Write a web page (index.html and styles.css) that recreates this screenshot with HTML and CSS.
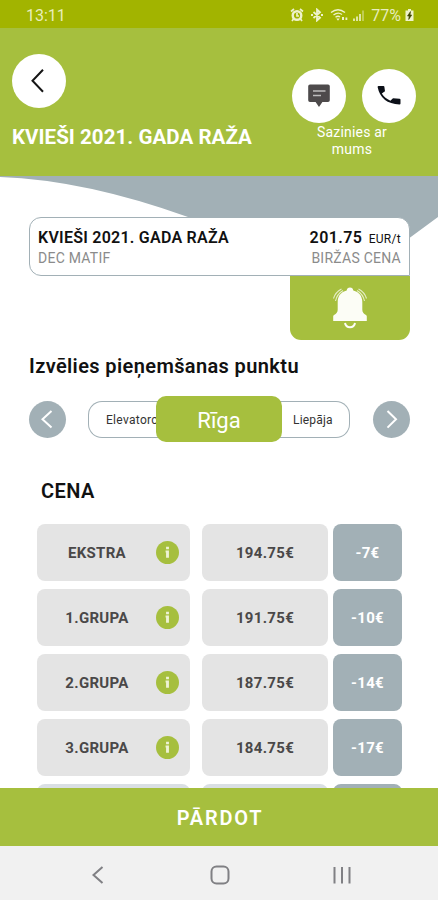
FILE: index.html
```
<!DOCTYPE html>
<html lang="lv">
<head>
  <meta charset="utf-8">
  <title>Kvieši 2021. gada raža</title>
  <link rel="stylesheet" href="styles.css">
</head>
<body>
  <div id="app">
    <!-- Status Bar -->
    <div class="status-bar">
      <span class="clock">13:11</span>
      <div class="status-icons">
        <!-- Alarm -->
        <svg class="alarm" viewBox="0 0 14 14">
          <circle cx="7" cy="7.5" r="4.3" fill="none" stroke-width="2.4"/>
          <path d="M1 3.5L4 1M13 3.5L10 1M3.5 11L2 13M10.5 11L12 13M7 5v3h2" fill="none" stroke-width="1.7"/>
        </svg>
        <!-- Bluetooth -->
        <svg class="bluetooth" viewBox="0 0 14 14">
          <path d="M3.5 4L10 9.7 7 12.5V1.5L10 4.3 3.5 10M1 7h2M11 7h2" fill="none" stroke-width="1.8"/>
        </svg>
        <!-- Wifi -->
        <svg class="wifi" viewBox="0 0 18 14">
          <path d="M1 4.500Q8 -1 15 4.500M3.500 7Q8 3.500 12 6.500M5.500 9.300Q8 7.500 10 9" fill="none" stroke-width="1.400"/>
          <path d="M8 12.800L6.300 10.600h3.400zM12 9h2v3h-2zM15.500 9.500h1.800v2.500h-1.800z" stroke="none"/>
        </svg>
        <!-- Signal -->
        <svg class="signal" viewBox="0 0 13 14">
          <path d="M1 10.500h2V13H1zM4 8.500h2V13H4zM7 6h2v7H7z" stroke="none" opacity=".8"/>
          <path d="M10 2.500h2V13h-2z" stroke="none" opacity=".4"/>
        </svg>
        <span class="battery-text">77%</span>
        <!-- Battery -->
        <svg class="battery" viewBox="0 0 9 14">
          <path d="M3 1h3v1.500h2.500V13h-8V2.500H3z" stroke="none"/>
          <path d="M5.500 3.500L2.500 8h1.700l-.5 3.500 3-4.500H5z" fill="#3d4500" stroke="#3d4500" stroke-width=".6"/>
        </svg>
      </div>
    </div>

    <!-- Header -->
    <div class="header">
      <div class="header-left">
        <button class="round-btn" title="Atpakaļ">
          <svg width="54" height="54" viewBox="0 0 54 54">
            <path d="M31 15.800L20.500 26.800 31 37.800" fill="none" stroke="#161616" stroke-width="2"/>
          </svg>
        </button>
        <h1>KVIEŠI 2021. GADA RAŽA</h1>
      </div>
      <div class="contact">
        <div class="contact-btns">
          <button class="round-btn" title="Ziņa">
            <svg width="54" height="54" viewBox="0 0 54 54">
              <path d="M18 15.500h18q1.800 0 1.800 1.800v13.900q0 1.800-1.800 1.800h-5.600L27 38l-3.400-5H18q-1.800 0-1.800-1.800V17.300q0-1.800 1.800-1.800z" fill="#4d4a4b"/>
              <path d="M21 22h12.500M21 26.500h8" stroke="#bdbdbd" stroke-width="1.500"/>
            </svg>
          </button>
          <button class="round-btn" title="Zvanīt">
            <svg width="54" height="54" viewBox="0 0 54 54">
              <path d="M16.600 17h4.800q1 0 1 1l.6 4.300-3.200 2.200q3 4.800 8.600 7.200l2.600-2.500 6.500.500q1 .1 1 1v3.700q0 1-1 1Q19 34.800 15.600 18q0-1 1-1z" fill="#0c1018"/>
            </svg>
          </button>
        </div>
        <p>Sazinies ar<br>mums</p>
      </div>
    </div>

    <!-- Content -->
    <div class="content">
      <svg class="wave" viewBox="0 0 438 64">
        <path d="M0 0H438V41L404 66H240L188 41Q85 4 0 1z" fill="#a2b0b6"/>
      </svg>

      <div class="quote">
        <div class="quote-card">
          <div class="quote-row">
            <span class="quote-name">KVIEŠI 2021. GADA RAŽA</span>
            <span class="quote-price">201.75 <small>EUR/t</small></span>
          </div>
          <div class="quote-row quote-sub">
            <span>DEC MATIF</span>
            <span>BIRŽAS CENA</span>
          </div>
        </div>
        <button class="bell-btn" title="Paziņojumi">
          <svg width="38" height="44" viewBox="0 0 38 44">
            <path d="M19 1.500c2 0 3 1.300 3.300 3 5.700 1.500 9 5.500 9 11.500v7.500c0 2.500 1 4 3.200 5.200.8.400 1.300 1 1.300 1.800v4.500H2.200v-4.500c0-.8.500-1.400 1.300-1.800 2.200-1.200 3.200-2.700 3.200-5.200V16c0-6 3.300-10 9-11.500.3-1.700 1.300-3 3.300-3z" fill="#fcfdf6"/>
            <path d="M14 37q.8 4.300 5 4.300t5-4.300" fill="none" stroke="#fcfdf6" stroke-width="2"/>
            <path d="M4.500 15Q6 8 12 4.500M2.500 12.500Q4.500 6 10.500 3M33.500 15Q32 8 26 4.500M35.500 12.500Q33.500 6 27.500 3" fill="none" stroke="#e5edc5" stroke-width="1.100"/>
          </svg>
        </button>
      </div>

      <h2>Izvēlies pieņemšanas punktu</h2>

      <!-- Delivery point selector -->
      <div class="selector">
        <button class="arrow-btn">
          <svg width="37" height="37" viewBox="0 0 37 37">
            <path d="M22.500 10L13.500 18.300 22.500 26.600" fill="none" stroke="#fff" stroke-width="2"/>
          </svg>
        </button>
        <div class="points">
          <span class="point prev">Elevatorc</span>
          <span class="point active">Rīga</span>
          <span class="point next">Liepāja</span>
        </div>
        <button class="arrow-btn">
          <svg width="37" height="37" viewBox="0 0 37 37">
            <path d="M14.500 10L23 18.300 14.500 26.600" fill="none" stroke="#fff" stroke-width="2"/>
          </svg>
        </button>
      </div>

      <h3>CENA</h3>

      <!-- Prices -->
      <div class="prices">
        <div class="grade"><span>EKSTRA</span><i class="info"><svg viewBox="0 0 24 24"><path d="M10.500 6h3v2.500h-3zM10 10h3.500v7.500h-3V12H10z"/></svg></i></div>
        <div class="price">194.75€</div>
        <div class="diff">-7€</div>

        <div class="grade"><span>1.GRUPA</span><i class="info"><svg viewBox="0 0 24 24"><path d="M10.500 6h3v2.500h-3zM10 10h3.500v7.500h-3V12H10z"/></svg></i></div>
        <div class="price">191.75€</div>
        <div class="diff">-10€</div>

        <div class="grade"><span>2.GRUPA</span><i class="info"><svg viewBox="0 0 24 24"><path d="M10.500 6h3v2.500h-3zM10 10h3.500v7.500h-3V12H10z"/></svg></i></div>
        <div class="price">187.75€</div>
        <div class="diff">-14€</div>

        <div class="grade"><span>3.GRUPA</span><i class="info"><svg viewBox="0 0 24 24"><path d="M10.500 6h3v2.500h-3zM10 10h3.500v7.500h-3V12H10z"/></svg></i></div>
        <div class="price">184.75€</div>
        <div class="diff">-17€</div>

        <div class="grade alt"></div>
        <div class="price alt"></div>
        <div class="diff"></div>
      </div>
    </div>

    <button class="sell-btn">PĀRDOT</button>

    <!-- Android Navigation -->
    <div class="nav-bar">
      <svg width="24" height="24" viewBox="0 0 24 24"><path d="M16.500 4L7.500 12l9 8"/></svg>
      <svg width="24" height="24" viewBox="0 0 24 24"><rect x="3.500" y="3.500" width="17" height="17" rx="5"/></svg>
      <svg width="24" height="24" viewBox="0 0 24 24"><path d="M4.500 4v16.500M12 4v16.500M19.500 4v16.500"/></svg>
    </div>
  </div>
</body>
</html>
```
FILE: styles.css
```
body {
  margin: 0;
  font-family: Roboto, "Noto Sans", sans-serif;
  background: #fff;
  color: #111;
}
button {
  border: none;
  padding: 0;
  font-family: inherit;
  cursor: pointer;
}
svg {
  display: block;
}
#app {
  width: 438px;
  height: 900px;
  display: flex;
  flex-direction: column;
  overflow: hidden;
}
/* Status Bar */
.status-bar {
  height: 28px;
  flex: none;
  box-sizing: border-box;
  padding: 2px 24px 0 26px;
  display: flex;
  justify-content: space-between;
  align-items: center;
  background: #a2b400;
  color: #e8edbd;
  font-size: 16px;
}
.status-icons {
  display: flex;
  align-items: center;
}
.status-icons svg {
  height: 14px;
  fill: #eef2cc;
  stroke: #eef2cc;
}
.alarm {
  width: 14px;
  margin-right: 6px;
}
.bluetooth {
  width: 14px;
  margin-right: 6px;
}
.wifi {
  width: 18px;
  margin-right: 4px;
}
.signal {
  width: 13px;
  margin-right: 6px;
}
.battery {
  width: 9px;
  margin-left: 4px;
}
/* Header */
.header {
  height: 148px;
  flex: none;
  box-sizing: border-box;
  padding: 26px 22px 0 12px;
  display: flex;
  justify-content: space-between;
  background: #a6bf3e;
  color: #fff;
}
.round-btn {
  width: 54px;
  height: 54px;
  border-radius: 50%;
  background: #fff;
}
h1 {
  margin: 11px 0 0;
  font-size: 20.5px;
  line-height: 28px;
  font-weight: 700;
  letter-spacing: 0.05px;
  white-space: nowrap;
}
.contact {
  margin-top: 15px;
}
.contact-btns {
  display: flex;
  gap: 16px;
}
.contact p {
  margin: 1px 0 0;
  width: 120px;
  font-size: 14px;
  line-height: 17px;
  letter-spacing: 0.2px;
  text-align: center;
}
/* Content */
.content {
  position: relative;
  flex: 1;
  min-height: 0;
  overflow: hidden;
}
.wave {
  position: absolute;
  top: 0;
  left: 0;
  width: 438px;
  height: 64px;
}
.quote {
  position: relative;
  margin: 41px 28px 0 29px;
  display: flex;
  flex-direction: column;
  align-items: flex-end;
}
.quote-card {
  width: 100%;
  height: 59px;
  box-sizing: border-box;
  padding: 10px 8px 0 8px;
  border: 1px solid #a2b0b6;
  border-radius: 12px 12px 0 12px;
  background: #fff;
}
.quote-row {
  display: flex;
  justify-content: space-between;
  line-height: 20px;
  font-size: 16px;
  font-weight: 600;
}
.quote-name {
  letter-spacing: 0.25px;
}
.quote-price {
  letter-spacing: 0.4px;
}
.quote-price small {
  margin-left: 2px;
  font-size: 12px;
  font-weight: 400;
  letter-spacing: 0.3px;
}
.quote-sub {
  line-height: 19px;
  font-size: 14px;
  font-weight: 400;
  letter-spacing: 0.25px;
  color: #8b8b8b;
}
.bell-btn {
  width: 120px;
  height: 64px;
  display: flex;
  justify-content: center;
  align-items: center;
  border-radius: 0 0 11px 11px;
  background: #a6bf3e;
}
h2 {
  margin: 12px 0 0 29px;
  font-size: 20px;
  line-height: 28px;
  font-weight: 600;
  letter-spacing: 0.38px;
}
/* Delivery point selector */
.selector {
  margin: 16px 28px 0 29px;
  display: flex;
  justify-content: space-between;
  align-items: center;
}
.arrow-btn {
  width: 37px;
  height: 37px;
  border-radius: 50%;
  background: #a2b0b6;
}
.points {
  width: 262px;
  margin-right: 1px;
  display: flex;
  align-items: center;
}
.point {
  box-sizing: border-box;
  height: 37px;
  line-height: 36px;
  font-size: 12px;
  color: #333;
  border: 1px solid #a2b0b6;
}
.point.prev {
  width: 78px;
  padding-left: 17px;
  border-right: none;
  border-radius: 14px 0 0 14px;
  letter-spacing: 0.3px;
}
.point.next {
  width: 78px;
  padding-left: 21px;
  border-left: none;
  border-radius: 0 14px 14px 0;
  letter-spacing: 0.2px;
}
.point.active {
  z-index: 1;
  width: 126px;
  height: 46px;
  margin: 0 -10px;
  line-height: 50px;
  font-size: 22px;
  text-align: center;
  color: #fff;
  border: none;
  border-radius: 10px;
  background: #a6bf3e;
}
h3 {
  margin: 35px 0 0 41px;
  font-size: 20px;
  line-height: 28px;
  font-weight: 600;
  letter-spacing: 0.4px;
}
/* Prices */
.prices {
  margin: 19px 36px 0 37px;
  display: grid;
  grid-template-columns: 165px 131px 69px;
  grid-auto-rows: 57px;
  row-gap: 8px;
}
.grade,
.price,
.diff {
  display: flex;
  align-items: center;
  justify-content: center;
  padding-top: 1px;
  box-sizing: border-box;
  border-radius: 8px;
  background: #e4e4e4;
  color: #4a4848;
  font-size: 15px;
  font-weight: 700;
  letter-spacing: 0.3px;
}
.grade {
  justify-content: flex-start;
  margin-right: 12px;
}
.grade span {
  width: 120px;
  text-align: center;
}
.price {
  margin-right: 5px;
}
.diff {
  background: #a2b0b6;
  color: #fff;
}
.alt {
  background: #dadfe4;
}
.info {
  width: 23px;
  height: 23px;
  margin: 0 0 2px -1px;
  border-radius: 50%;
  background: #a6bf3e;
}
.info svg {
  width: 23px;
  height: 23px;
  fill: #eef3d4;
}
/* Bottom */
.sell-btn {
  height: 58px;
  flex: none;
  padding: 2px 0 0 2px;
  background: #a6bf3e;
  color: #fff;
  font-size: 20px;
  font-weight: 600;
  letter-spacing: 1.8px;
}
.nav-bar {
  height: 54px;
  flex: none;
  padding: 0 84px 0 86px;
  display: flex;
  justify-content: space-between;
  align-items: center;
  background: #f1f1f1;
}
.nav-bar svg {
  margin-top: 3px;
  fill: none;
  stroke: #808084;
  stroke-width: 2;
}
```
